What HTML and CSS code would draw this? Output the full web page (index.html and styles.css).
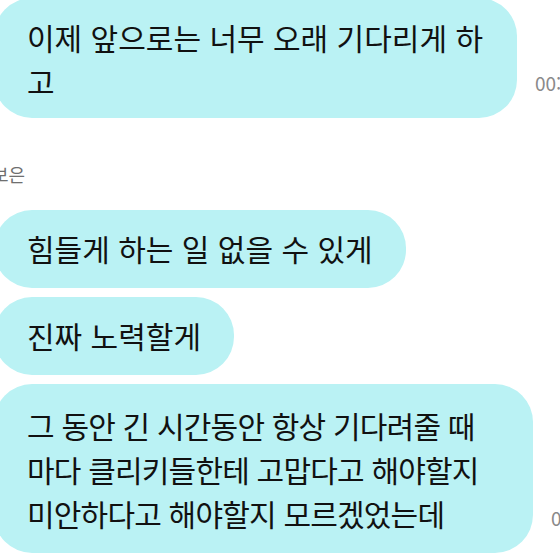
FILE: index.html
```html
<!DOCTYPE html>
<html lang="ko">
  <head>
    <meta charset="UTF-8" />
    <meta name="viewport" content="width=device-width, initial-scale=1.0" />
    <title>Chat</title>
    <link rel="stylesheet" href="styles.css">
  </head>
  <body>
    <div class="chat">
      <div class="row">
        <div class="bubble first">이제 앞으로는 너무 오래 기다리게 하고</div>
        <span class="time">00:00</span>
      </div>

      <div class="divider">보은</div>

      <div class="row">
        <div class="bubble">힘들게 하는 일 없을 수 있게</div>
      </div>
      <div class="row">
        <div class="bubble">진짜 노력할게</div>
      </div>
      <div class="row">
        <div class="bubble last">그 동안 긴 시간동안 항상 기다려줄 때마다 클리키들한테 고맙다고 해야할지 미안하다고 해야할지 모르겠었는데</div>
        <span class="time">00:00</span>
      </div>
    </div>
  </body>
</html>
```

FILE: styles.css
```css
body {
  margin: 0;
  background: #ffffff;
  font-family: "Noto Sans CJK KR", "Noto Sans", sans-serif;
  overflow: hidden;
}
.chat {
  margin-top: -2px;
  margin-left: -6px;
  display: flex;
  flex-direction: column;
  gap: 9px;
}
.row {
  display: flex;
  align-items: flex-end;
  gap: 18px;
  white-space: nowrap;
}
.bubble {
  background: #baf2f4;
  color: #111111;
  font-size: 30px;
  line-height: 43px;
  padding: 17px 33px 18px 33px;
  border-radius: 38px;
  white-space: normal;
  word-break: break-all;
  flex-shrink: 0;
}
.bubble.first {
  width: 463px;
  padding-right: 27px;
  padding-bottom: 15px;
  line-height: 44px;
}
.bubble.last {
  width: 463px;
  padding: 19px 43px 18px 33px;
  line-height: 44px;
  letter-spacing: -0.8px;
}
.time {
  font-size: 19px;
  color: #8a8a8a;
  margin-bottom: 22px;
}
.divider {
  font-size: 18px;
  line-height: 24px;
  color: #6f6f6f;
  margin: 35px 0 15px -2px;
}
```
